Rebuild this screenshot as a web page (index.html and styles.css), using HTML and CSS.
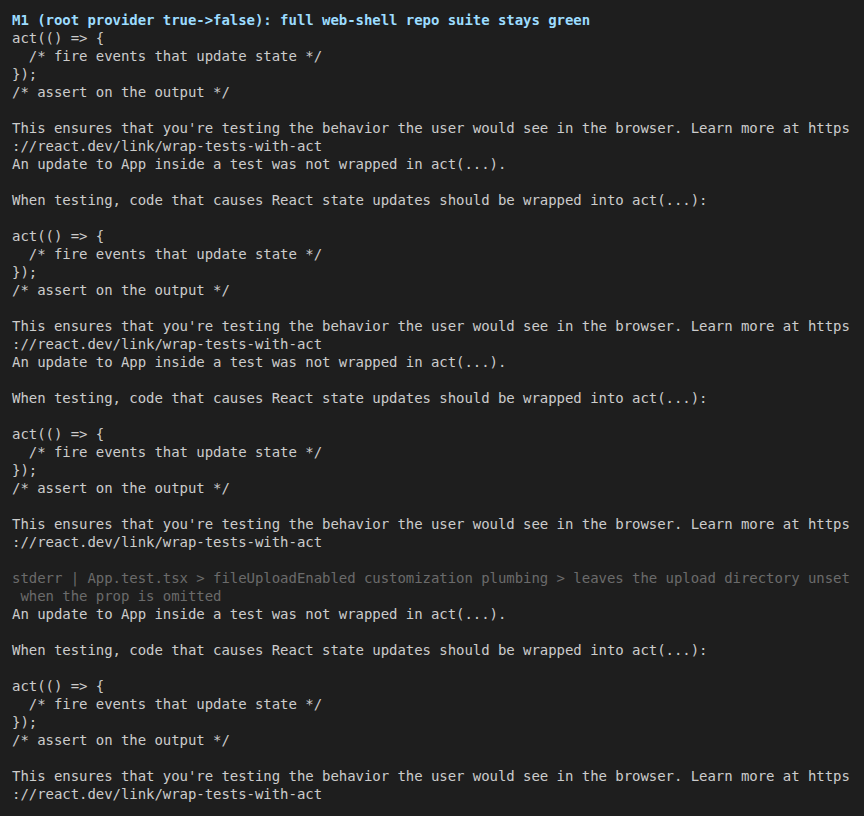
FILE: index.html
```html
<!DOCTYPE html>
<html>
<head>
<meta charset="utf-8">
<link rel="stylesheet" href="styles.css">
</head>
<body>
<div class="term">
<div class="ln head">M1 (root provider true-&gt;false): full web-shell repo suite stays green</div>
<div class="ln">act(() =&gt; {</div>
<div class="ln">  /* fire events that update state */</div>
<div class="ln">});</div>
<div class="ln">/* assert on the output */</div>
<div class="ln"> </div>
<div class="ln">This ensures that you're testing the behavior the user would see in the browser. Learn more at https</div>
<div class="ln">://react.dev/link/wrap-tests-with-act</div>
<div class="ln">An update to App inside a test was not wrapped in act(...).</div>
<div class="ln"> </div>
<div class="ln">When testing, code that causes React state updates should be wrapped into act(...):</div>
<div class="ln"> </div>
<div class="ln">act(() =&gt; {</div>
<div class="ln">  /* fire events that update state */</div>
<div class="ln">});</div>
<div class="ln">/* assert on the output */</div>
<div class="ln"> </div>
<div class="ln">This ensures that you're testing the behavior the user would see in the browser. Learn more at https</div>
<div class="ln">://react.dev/link/wrap-tests-with-act</div>
<div class="ln">An update to App inside a test was not wrapped in act(...).</div>
<div class="ln"> </div>
<div class="ln">When testing, code that causes React state updates should be wrapped into act(...):</div>
<div class="ln"> </div>
<div class="ln">act(() =&gt; {</div>
<div class="ln">  /* fire events that update state */</div>
<div class="ln">});</div>
<div class="ln">/* assert on the output */</div>
<div class="ln"> </div>
<div class="ln">This ensures that you're testing the behavior the user would see in the browser. Learn more at https</div>
<div class="ln">://react.dev/link/wrap-tests-with-act</div>
<div class="ln"> </div>
<div class="ln dim">stderr | App.test.tsx &gt; fileUploadEnabled customization plumbing &gt; leaves the upload directory unset</div>
<div class="ln dim"> when the prop is omitted</div>
<div class="ln">An update to App inside a test was not wrapped in act(...).</div>
<div class="ln"> </div>
<div class="ln">When testing, code that causes React state updates should be wrapped into act(...):</div>
<div class="ln"> </div>
<div class="ln">act(() =&gt; {</div>
<div class="ln">  /* fire events that update state */</div>
<div class="ln">});</div>
<div class="ln">/* assert on the output */</div>
<div class="ln"> </div>
<div class="ln">This ensures that you're testing the behavior the user would see in the browser. Learn more at https</div>
<div class="ln">://react.dev/link/wrap-tests-with-act</div>
</div>
</body>
</html>
```
FILE: styles.css
```css
html, body {
  margin: 0;
  padding: 0;
  background: #1e1e1e;
}
.term {
  padding: 11px 12px 0 12px;
  font-family: "DejaVu Sans Mono", monospace;
  font-size: 14px;
  line-height: 18px;
  letter-spacing: -0.05px;
  color: #cccccc;
  min-height: 816px;
  box-sizing: border-box;
}
.ln {
  white-space: pre;
  height: 18px;
}
.head {
  color: #9cdcfe;
  font-weight: bold;
}
.dim {
  color: #6b6b6b;
}
```
